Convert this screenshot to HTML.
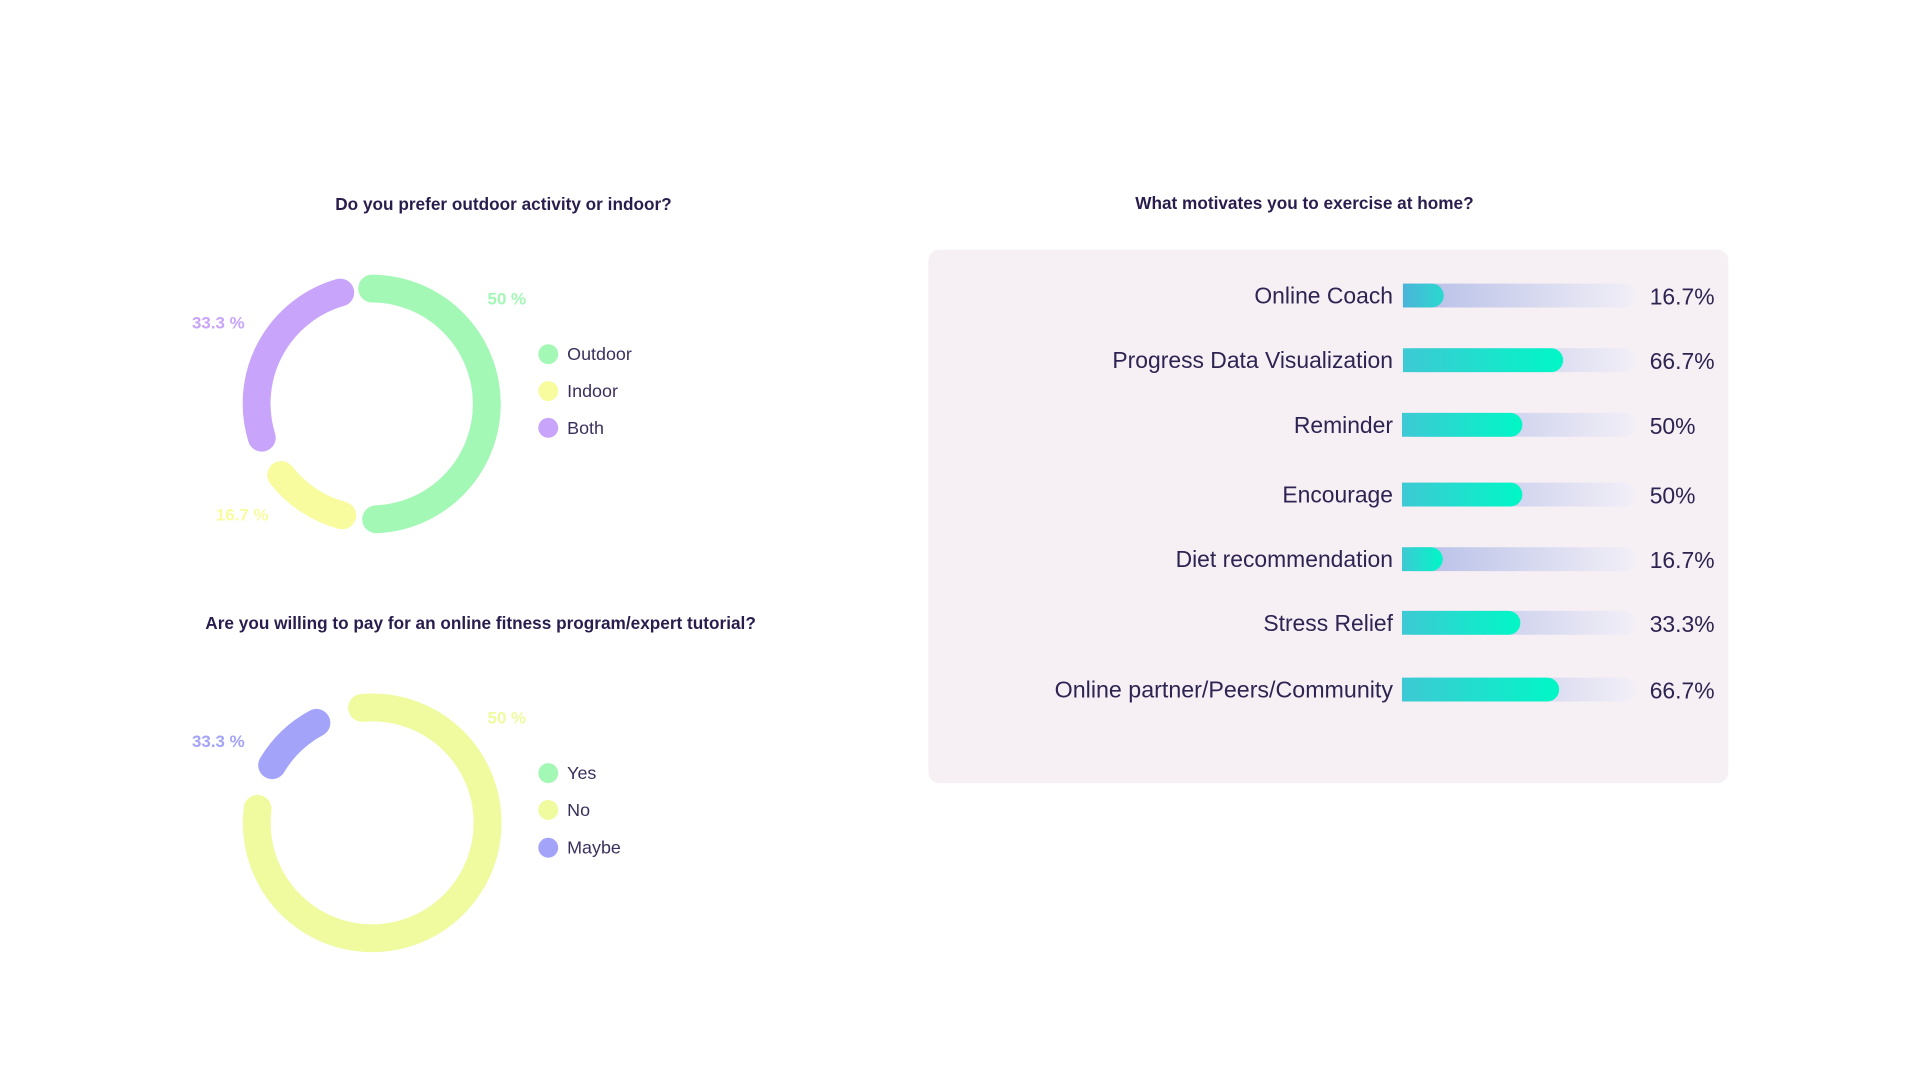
<!DOCTYPE html>
<html><head><meta charset="utf-8"><style>
html,body{margin:0;padding:0;background:#fff;width:1920px;height:1080px;overflow:hidden}
svg{display:block}
.t{font-family:"Liberation Sans",sans-serif;font-weight:bold;font-size:17.3px;fill:#2a1d4e}
.lg{font-family:"Liberation Sans",sans-serif;font-size:18px;fill:#3a2f5c}
.pl{font-family:"Liberation Sans",sans-serif;font-weight:bold;font-size:17px}
.rl{font-family:"Liberation Sans",sans-serif;font-size:23px;fill:#2d2452}
</style></head><body>
<svg width="1920" height="1080" viewBox="0 0 1920 1080">
<defs>
<linearGradient id="fill" x1="0" x2="1" y1="0" y2="0"><stop offset="0" stop-color="#3ec9d4"/><stop offset="1" stop-color="#00f7c6"/></linearGradient>
<linearGradient id="fillb" x1="0" x2="1"><stop offset="0" stop-color="#4bb3d9"/><stop offset="1" stop-color="#2ad9cf"/></linearGradient>
<linearGradient id="track" x1="0" x2="1"><stop offset="0" stop-color="#b3bce6"/><stop offset="1" stop-color="#f2eff7"/></linearGradient>
</defs>
<g transform="scale(0.995)">
<!-- Chart 1 -->
<text class="t" x="506" y="211" text-anchor="middle">Do you prefer outdoor activity or indoor?</text>
<g fill="none" stroke-width="28" stroke-linecap="round">
<path d="M374 290 A116 116 0 0 1 378 521.9" stroke="#a3f8b6"/>
<path d="M344 518 A116 116 0 0 1 282.6 477.4" stroke="#f8fc9e"/>
<path d="M263.1 439.9 A116 116 0 0 1 342 294" stroke="#c8a4fb"/>
</g>
<text class="pl" x="490" y="306" fill="#a3f8b6">50 %</text>
<text class="pl" x="193" y="330" fill="#c8a4fb">33.3 %</text>
<text class="pl" x="217" y="523" fill="#f8fc9e">16.7 %</text>
<circle cx="551" cy="356" r="10" fill="#a3f8b6"/><text class="lg" x="570" y="362">Outdoor</text>
<circle cx="551" cy="393" r="10" fill="#f8fc9e"/><text class="lg" x="570" y="399">Indoor</text>
<circle cx="551" cy="430" r="10" fill="#c8a4fb"/><text class="lg" x="570" y="436">Both</text>

<!-- Chart 2 -->
<text class="t" x="483" y="632" text-anchor="middle">Are you willing to pay for an online fitness program/expert tutorial?</text>
<g fill="none" stroke-width="28" stroke-linecap="round">
<path d="M363.9 711.4 A116 116 0 1 1 258.9 812.9" stroke="#f0fa9e"/>
<path d="M273.5 769 A116 116 0 0 1 318 726.5" stroke="#a3a3fa"/>
</g>
<text class="pl" x="490" y="727" fill="#f0fa9e">50 %</text>
<text class="pl" x="193" y="751" fill="#a3a3fa">33.3 %</text>
<circle cx="551" cy="777" r="10" fill="#a3f8b6"/><text class="lg" x="570" y="783">Yes</text>
<circle cx="551" cy="814" r="10" fill="#f0fa9e"/><text class="lg" x="570" y="820">No</text>
<circle cx="551" cy="852" r="10" fill="#a3a3fa"/><text class="lg" x="570" y="858">Maybe</text>

<!-- Right panel -->
<text class="t" x="1311" y="210" text-anchor="middle">What motivates you to exercise at home?</text>
<rect x="933" y="251" width="804" height="536" rx="11" fill="#f6eff4"/>

<g>
<rect x="1410" y="285" width="234" height="24" rx="12" fill="url(#track)"/><rect x="1410" y="285" width="12" height="24" fill="#b3bce6"/>
<path d="M1410 285 H1439 A12 12 0 0 1 1439 309 H1410 Z" fill="url(#fillb)"/>
<text class="rl" x="1400" y="305" text-anchor="end">Online Coach</text><text class="rl" x="1658" y="306">16.7%</text>

<rect x="1410" y="350" width="234" height="24" rx="12" fill="url(#track)"/>
<path d="M1410 350 H1559 A12 12 0 0 1 1559 374 H1410 Z" fill="url(#fill)"/>
<text class="rl" x="1400" y="370" text-anchor="end">Progress Data Visualization</text><text class="rl" x="1658" y="371">66.7%</text>

<rect x="1409" y="415" width="235" height="24" rx="12" fill="url(#track)"/>
<path d="M1409 415 H1518 A12 12 0 0 1 1518 439 H1409 Z" fill="url(#fill)"/>
<text class="rl" x="1400" y="435" text-anchor="end">Reminder</text><text class="rl" x="1658" y="436">50%</text>

<rect x="1409" y="485" width="235" height="24" rx="12" fill="url(#track)"/>
<path d="M1409 485 H1518 A12 12 0 0 1 1518 509 H1409 Z" fill="url(#fill)"/>
<text class="rl" x="1400" y="505" text-anchor="end">Encourage</text><text class="rl" x="1658" y="506">50%</text>

<rect x="1409" y="550" width="235" height="24" rx="12" fill="url(#track)"/>
<path d="M1409 550 H1438 A12 12 0 0 1 1438 574 H1409 Z" fill="url(#fill)"/>
<text class="rl" x="1400" y="570" text-anchor="end">Diet recommendation</text><text class="rl" x="1658" y="571">16.7%</text>

<rect x="1409" y="614" width="235" height="24" rx="12" fill="url(#track)"/>
<path d="M1409 614 H1516 A12 12 0 0 1 1516 638 H1409 Z" fill="url(#fill)"/>
<text class="rl" x="1400" y="634" text-anchor="end">Stress Relief</text><text class="rl" x="1658" y="635">33.3%</text>

<rect x="1409" y="681" width="235" height="24" rx="12" fill="url(#track)"/>
<path d="M1409 681 H1555 A12 12 0 0 1 1555 705 H1409 Z" fill="url(#fill)"/>
<text class="rl" x="1400" y="701" text-anchor="end" textLength="340" lengthAdjust="spacingAndGlyphs">Online partner/Peers/Community</text><text class="rl" x="1658" y="702">66.7%</text>
</g>
</g>
</svg>
</body></html>
